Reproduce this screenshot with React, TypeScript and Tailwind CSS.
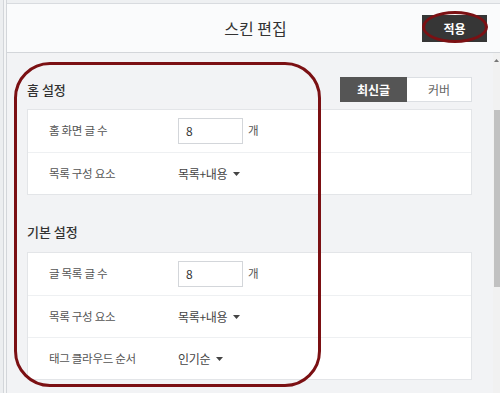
import React from "react";

const font = { fontFamily: '"Noto Sans CJK KR", "Noto Sans", sans-serif' };

function Caret() {
  return (
    <svg width="7" height="4" viewBox="0 0 7 4" className="ml-[6px] mt-[1px]">
      <path d="M0 0h7L3.5 4z" fill="#444" />
    </svg>
  );
}

function Row({ label, children, first }: { label: string; children: React.ReactNode; first?: boolean }) {
  return (
    <div className={`flex h-[42px] items-center ${first ? "h-[41px]" : "border-t border-[#eef0f2]"}`}>
      <div className="w-[150px] pl-[21px] text-[11.5px] text-[#555] tracking-[-0.3px]">{label}</div>
      <div className="flex items-center text-[12px] text-[#444]">{children}</div>
    </div>
  );
}

function NumberInput({ value }: { value: string }) {
  return (
    <>
      <div className="flex h-[26px] w-[65px] items-center border border-[#d3d6da] bg-white pl-[7px] text-[12px] text-[#333]">
        {value}
      </div>
      <span className="ml-[5px] text-[11.5px] text-[#555]">개</span>
    </>
  );
}

function Select({ value }: { value: string }) {
  return (
    <div className="flex items-center tracking-[-0.3px]">
      {value}
      <Caret />
    </div>
  );
}

export default function App() {
  return (
    <div className="relative h-[393px] w-[500px] overflow-hidden bg-[#f2f3f5]" style={font}>
      <div className="flex h-full">
        {/* left frame edge */}
        <div className="flex h-full">
          <div className="w-[3px] bg-[#eceef0]" />
          <div className="w-[4px] border-x border-[#d3d6da] bg-[#f4f5f6]" />
        </div>

        <div className="flex min-w-0 flex-1 flex-col">
          <div className="h-[4px] border-b border-[#d8dbdf] bg-[#eef0f2]" />

          {/* header */}
          <div className="relative flex h-[49px] items-center justify-center border-b border-[#d3d6da] bg-[#fafbfc]">
            <span className="ml-[4px] text-[16px] text-[#333]">스킨 편집</span>
            <div className="absolute right-[13px] top-[11px] flex h-[27px] w-[65px] items-center justify-center bg-[#363636] text-[12px] font-bold text-white">
              적용
            </div>
            <div className="absolute right-[12px] top-[7px] h-[32px] w-[66px] rounded-[50%] border-[3px] border-[#7b1013]" />
          </div>

          {/* body */}
          <div className="flex min-h-0 flex-1">
            <div className="flex-1 pl-[20px] pr-[21px] pt-[24px]">
              <div className="flex h-[25px] items-center justify-between">
                <span className="text-[13px] font-medium text-[#333]">홈 설정</span>
                <div className="flex h-[25px] text-[12px]">
                  <div className="flex w-[67px] items-center justify-center bg-[#555] font-bold text-white">최신글</div>
                  <div className="flex w-[65px] items-center justify-center border border-l-0 border-[#dcdfe3] bg-white text-[#666]">
                    커버
                  </div>
                </div>
              </div>

              <div className="mt-[7px] border border-[#e3e5e8] bg-white">
                <Row label="홈 화면 글 수" first>
                  <NumberInput value="8" />
                </Row>
                <Row label="목록 구성 요소">
                  <Select value="목록+내용" />
                </Row>
              </div>

              <div className="mb-[8px] mt-[24px] flex h-[25px] items-center">
                <span className="text-[13px] font-medium text-[#333]">기본 설정</span>
              </div>

              <div className="border border-[#e3e5e8] bg-white">
                <Row label="글 목록 글 수" first>
                  <NumberInput value="8" />
                </Row>
                <Row label="목록 구성 요소">
                  <Select value="목록+내용" />
                </Row>
                <Row label="태그 클라우드 순서">
                  <Select value="인기순" />
                </Row>
              </div>
            </div>

            {/* scrollbar */}
            <div className="flex w-[7px] flex-col bg-[#f1f1f1]">
              <svg width="7" height="10" viewBox="0 0 7 10" className="mt-[3px]">
                <path d="M1 6h5L3.5 3z" fill="#777" />
              </svg>
              <div className="mt-[44px] h-[177px] w-[6px] self-end bg-[#c1c1c1]" />
            </div>
          </div>
        </div>
      </div>

      {/* annotation outline */}
      <div className="absolute left-[14px] top-[62px] h-[325px] w-[307px] rounded-[36px] border-[3px] border-[#7b1013]" />
    </div>
  );
}
